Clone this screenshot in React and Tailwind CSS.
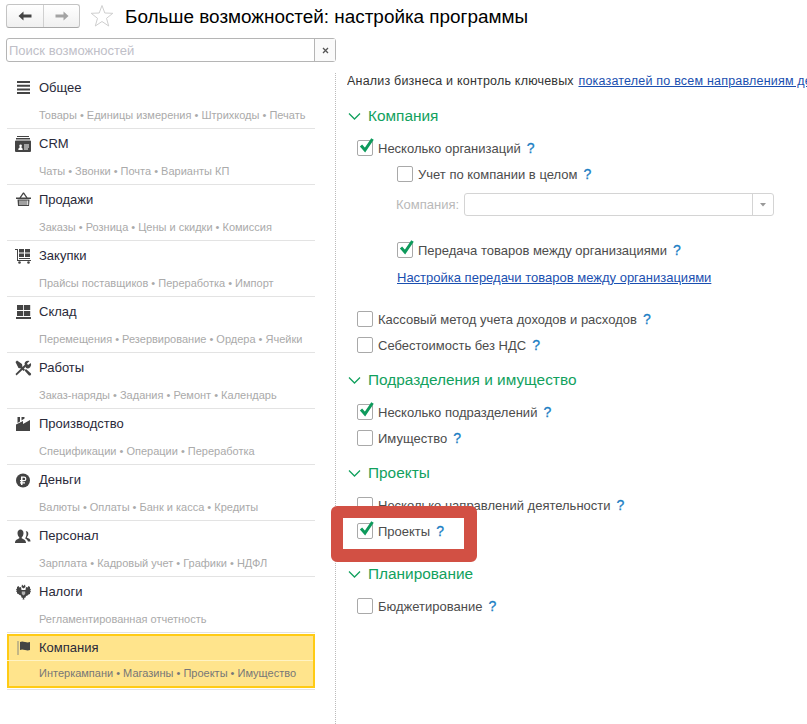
const F = "font-['Liberation_Sans',Arial,sans-serif]";

function Icon({ children }) {
  return (
    <svg width="18" height="18" viewBox="0 0 18 18" fill="#444">
      {children}
    </svg>
  );
}

const icons = {
  general: (
    <Icon>
      <path d="M3 2h13v2H3zM3 5.700h13v2H3zM3 9.400h13v2H3zM3 13h13v2H3z" />
    </Icon>
  ),
  crm: (
    <Icon>
      <path d="M3 1h12v1H3zM2 3h14v1.500H2z" />
      <path fillRule="evenodd" d="M2 5.500h14a1 1 0 0 1 1 1V16a1 1 0 0 1-1 1H2a1 1 0 0 1-1-1V6.500a1 1 0 0 1 1-1zm1.300 9.500h5.400c0-2-1-2.500-1.600-2.700.6-.5.800-1 .8-1.500a1.300 1.300 0 0 0-2.600 0c0 .5.200 1 .7 1.500-.6.200-1.700.7-1.700 2.700zM10 9.500v1h5v-1zm0 2v1h5v-1zm0 2v1h4v-1z" />
    </Icon>
  ),
  sales: (
    <Icon>
      <path d="M2 6.500h15V8H2zM3.500 8.500h12L15 15H4zM5.500 6.500L9 1.500h1l3.500 5H12L9.500 3 7 6.500z" />
      <path d="M5.500 9.500h1v4.500h-1zM7.500 9.500h1v4.500h-1zM9.500 9.500h1v4.500h-1zM11.500 9.500h1v4.500h-1zM13.200 9.500h1v4.500h-1z" fill="#fff" />
    </Icon>
  ),
  purchase: (
    <Icon>
      <path d="M1 2h3v11h13v1H3V3H1z" />
      <path d="M5 2h5v3.500H5zM11 2h5v3.500h-5zM5 6.500h5V10H5zM11 6.500h5V10h-5zM5 11h11v1H5z" />
      <circle cx="5.500" cy="15.500" r="1.300" />
      <circle cx="14.500" cy="15.500" r="1.300" />
    </Icon>
  ),
  stock: (
    <Icon>
      <path d="M3 2h6.200v5H3zM10 2h6.200v5H10zM3 8h6.200v5H3zM10 8h6.200v5H10zM2 14h15v2H2z" />
    </Icon>
  ),
  works: (
    <Icon>
      <path d="M2.500 16.500L1.500 15 11 5.500 12.500 7z" />
      <path d="M10.500 4.500A3.600 3.600 0 0 1 15.500 2L13 4.500l1 1.500 2.700-2A3.600 3.600 0 0 1 12 9z" />
      <path d="M1.500 3L3 1.500l5 3.500 .5 3L11 10.500 9.500 12 7 9.500 4.500 9z" />
      <path d="M10.500 11.500l1.500-1.500 5 4.500c.5 1-.5 2.500-2 2z" />
    </Icon>
  ),
  production: (
    <Icon>
      <path d="M3.500 2H6v4.500L3.500 8zM7.500 2h3v1.500l-3 2z" />
      <path d="M2 16V9.500L9 6v3l7-4v11z" />
    </Icon>
  ),
  money: (
    <Icon>
      <circle cx="9" cy="9.500" r="7" />
      <path d="M7 5.500h3a2.400 2.400 0 0 1 0 4.800H8.500v.9H11v1.200H8.500v1.600H7v-1.600H6v-1.200h1v-.9H6V9.100h1zm1.500 1.200v2.400H10a1.200 1.200 0 0 0 0-2.400z" fill="#fff" />
    </Icon>
  ),
  staff: (
    <Icon>
      <path d="M1 16c0-3 2-3.500 4-4.500.5-.3.500-1 0-1.500-1-1-1.500-2.500-1.500-4 0-2 1.500-3.500 3-3.500s3 1.500 3 3.500c0 1.500-.5 3-1.500 4-.5.5-.5 1.200 0 1.500 2 1 4 1.500 4 4.500z" />
      <path d="M11.500 4c1.800 0 2.800 1 2.800 2.700 0 1.200-.5 2.300-1.200 3-.3.400-.3.900 0 1.100 1.500.7 3.400 1 3.400 3.700h-2.500c-.3-1.500-2-2.300-2.800-2.900.5-1.500 1.300-2.600 1.300-4.500 0-1.200-.3-2.200-.9-3z" />
    </Icon>
  ),
  taxes: (
    <Icon>
      <path d="M8 1.500L9.500 3 11 1.500l.5 2.500-2 1.500-2-1.500z" />
      <path d="M3 4l1.500-1 1 1.500L7 4l.5 3h4L12 4l1.500.5 1-1.500L16 4v1.500l1 1-.8 1 .8 1.500-1 .5v1.500l-1.500.5-1 1-1.500.5-.5 1.500-1.500.5.500 1.500h-2l.5-1.500-1.500-.5L7 12.500 5.500 12l-1-1-1.500-.5V9L2 8.500 2.800 7.500 2 6.500l1-1z" />
      <path d="M7.800 8.500h3.400v2.500L9.500 12.500 7.800 11z" fill="#b5b5b5" />
    </Icon>
  ),
  flag: (
    <Icon>
      <path d="M3.500 2h1v14h-1z" fill="#8a8a80" />
      <path d="M6 3c2-1 3-.5 5 0s3.500.5 5 0v8c-1.500.5-3 .5-5 0s-3-1-5 0z" />
    </Icon>
  ),
};

const items = [
  ["general", "Общее", "Товары • Единицы измерения • Штрихкоды • Печать"],
  ["crm", "CRM", "Чаты • Звонки • Почта • Варианты КП"],
  ["sales", "Продажи", "Заказы • Розница • Цены и скидки • Комиссия"],
  ["purchase", "Закупки", "Прайсы поставщиков • Переработка • Импорт"],
  ["stock", "Склад", "Перемещения • Резервирование • Ордера • Ячейки"],
  ["works", "Работы", "Заказ-наряды • Задания • Ремонт • Календарь"],
  ["production", "Производство", "Спецификации • Операции • Переработка"],
  ["money", "Деньги", "Валюты • Оплаты • Банк и касса • Кредиты"],
  ["staff", "Персонал", "Зарплата • Кадровый учет • Графики • НДФЛ"],
  ["taxes", "Налоги", "Регламентированная отчетность"],
];

function NavItem({ icon, title, sub }) {
  return (
    <div className="h-[56px] border-b border-[#e3e3e3] flex flex-col">
      <div className="h-[29px] flex items-center">
        <div className="w-[32px] flex justify-center">{icons[icon]}</div>
        <span className="text-[13px] text-[#2a2a3a]">{title}</span>
      </div>
      <div className="h-[26px] pl-[32px] flex items-center pt-[1px] text-[11px] text-[#aaaaaa] whitespace-nowrap">{sub}</div>
    </div>
  );
}

function Check({ on }) {
  return (
    <span className="relative w-[16px] h-[16px] shrink-0 rounded-[2px] border border-[#a9a9a9] bg-white">
      {on && (
        <svg className="absolute left-[0px] top-[-4px]" width="18" height="17" viewBox="0 0 18 17">
          <path d="M3 8.500 L7 13 L14.500 2" fill="none" stroke="#0e9a5c" strokeWidth="3" />
        </svg>
      )}
    </span>
  );
}

function Row({ on, children, indent = false, className = "" }) {
  return (
    <div className={`h-[26px] flex items-center text-[13px] text-[#4c4c4c] whitespace-nowrap ${indent ? "pl-[50px]" : "pl-[10px]"} ${className}`}>
      <Check on={on} />
      <span className="ml-[5px] mt-[2px]">{children}</span>
      <span className="ml-[6px] mt-[1px] text-[#1b7ec4] text-[14px] [-webkit-text-stroke:0.3px_#1b7ec4]">?</span>
    </div>
  );
}

function Heading({ children, className = "" }) {
  return (
    <div className={`h-[24px] flex items-center text-[#12a15e] text-[15.400px] ${className}`}>
      <svg width="13" height="8" viewBox="0 0 13 8" className="mr-[7px] ml-[1px]">
        <path d="M1 1.500 L6.500 7 L12 1.500" fill="none" stroke="#12a15e" strokeWidth="1.300" />
      </svg>
      {children}
    </div>
  );
}

export default function App() {
  return (
    <div className={`${F} relative w-[807px] h-[724px] bg-white overflow-hidden`}>
      <div className="h-[38px] flex items-start pt-[4px] pl-[6px]">
        <div className="w-[74px] h-[24px] flex rounded-[3px] border border-[#c4c4c4] border-b-[#a8a8a8] bg-gradient-to-b from-white to-[#f0f0f0]">
          <div className="w-[37px] flex items-center justify-center border-r border-[#d0d0d0]">
            <svg width="14" height="10" viewBox="0 0 14 10"><path d="M0.500 5L5.500 0.500V3.500H13.500V6.500H5.500V9.500z" fill="#444" /></svg>
          </div>
          <div className="flex-1 flex items-center justify-center">
            <svg width="14" height="10" viewBox="0 0 14 10"><path d="M13.500 5L8.500 0.500V3.500H0.500V6.500H8.500V9.500z" fill="#a3a3a3" /></svg>
          </div>
        </div>
        <svg className="ml-[10px]" width="24" height="24" viewBox="0 0 24 24">
          <path d="M12 1.500 L14.800 9 L22.800 9.300 L16.500 14.300 L18.700 22 L12 17.500 L5.300 22 L7.500 14.300 L1.200 9.300 L9.200 9z" fill="none" stroke="#cfcfcf" strokeWidth="1" />
        </svg>
        <h1 className="ml-[11px] text-[18.900px] leading-[26px] text-black font-normal whitespace-nowrap">Больше возможностей: настройка программы</h1>
      </div>

      <div className="ml-[6px] w-[330px] h-[24px] flex rounded-[3px] border border-[#b5b5b5] bg-white">
        <div className="flex-1 flex items-center pl-[2px] pt-[1px] text-[13px] text-[#c0c0c8]">Поиск возможностей</div>
        <div className="w-[21px] flex items-center justify-center border-l border-[#b5b5b5] bg-[#fafafa]">
          <svg width="7" height="7" viewBox="0 0 7 7"><path d="M1 1L6 6M6 1L1 6" stroke="#555" strokeWidth="1.300" /></svg>
        </div>
      </div>

      <div className="flex mt-[8px]">
        <nav className="ml-[7px] w-[308px] shrink-0 pt-[3px]">
          {items.map(([i, t, s]) => (
            <NavItem key={t} icon={i} title={t} sub={s} />
          ))}
          <div className="h-[54px] mt-[1px] border-2 border-[#ffcb14] bg-[#ffe48c] flex flex-col">
            <div className="h-[25px] flex items-center border-b border-[#fff3c4] -ml-[2px]">
              <div className="w-[32px] flex justify-center">{icons.flag}</div>
              <span className="text-[13px] text-[#2a2a3a]">Компания</span>
            </div>
            <div className="flex-1 pl-[30px] flex items-center text-[11px] text-[#777] whitespace-nowrap">Интеркампани • Магазины • Проекты • Имущество</div>
          </div>
          <div className="h-[1px] mt-[1px] bg-[#e3e3e3]" />
        </nav>

        <main className="relative ml-[20px] mt-[3px] min-w-0 flex-1 border-l border-dotted border-[#bbb] h-[651px] pl-[11px]">
          <div className="h-[16px] flex items-center text-[12.500px] tracking-[0.2px] text-[#333] whitespace-nowrap overflow-hidden">
            Анализ бизнеса и контроль ключевых&nbsp;<a className="ml-[1px] text-[#1a4fb0] underline">показателей по всем направлениям деятельности</a>
          </div>

          <Heading className="mt-[15px]">Компания</Heading>
          <Row on className="mt-[7px]">Несколько организаций</Row>
          <Row indent>Учет по компании в целом</Row>
          <div className="mt-[6px] h-[23px] pl-[49px] flex items-center">
            <span className="w-[68px] text-[13px] text-[#b9b9b9]">Компания:</span>
            <div className="w-[310px] h-[23px] flex rounded-[3px] border border-[#d4d4d4]">
              <div className="flex-1" />
              <div className="w-[21px] flex items-center justify-center border-l border-[#d4d4d4]">
                <svg width="6" height="4" viewBox="0 0 6 4"><path d="M0 0h6L3 3.500z" fill="#999" /></svg>
              </div>
            </div>
          </div>
          <Row on indent className="mt-[21px]">Передача товаров между организациями</Row>
          <div className="mt-[1px] h-[26px] pl-[50px] flex items-center text-[13px]">
            <a className="mt-[2px] text-[#1a4fb0] underline">Настройка передачи товаров между организациями</a>
          </div>
          <Row className="mt-[16px]">Кассовый метод учета доходов и расходов</Row>
          <Row>Себестоимость без НДС</Row>

          <Heading className="mt-[10px]">Подразделения и имущество</Heading>
          <Row on className="mt-[7px]">Несколько подразделений</Row>
          <Row>Имущество</Row>

          <Heading className="mt-[10px]">Проекты</Heading>
          <Row className="mt-[7px]">Несколько направлений деятельности</Row>
          <Row on>Проекты</Row>

          <Heading className="mt-[18px]">Планирование</Heading>
          <Row className="mt-[7px]">Бюджетирование</Row>

          <div className="absolute left-[-5px] top-[433px] w-[146px] h-[56px] rounded-[6px] border-t-[12px] border-l-[12px] border-r-[13px] border-b-[13px] border-[#d25044]" />
        </main>
      </div>
    </div>
  );
}
